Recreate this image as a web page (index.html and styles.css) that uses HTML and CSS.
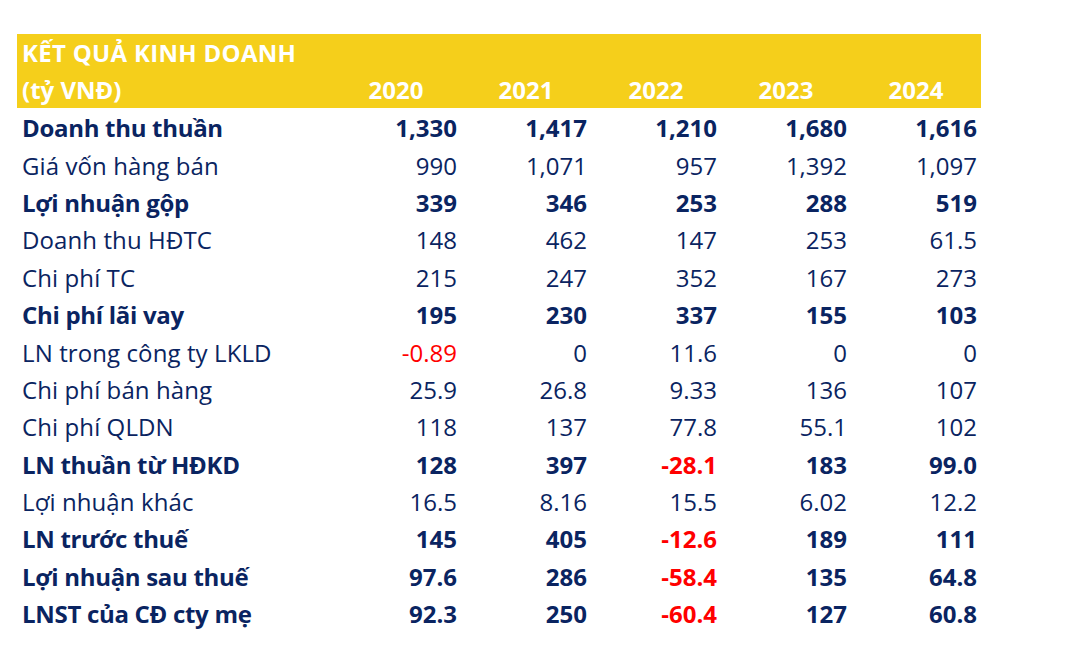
FILE: index.html
```html
<!DOCTYPE html>
<html lang="vi">
<head>
<meta charset="utf-8">
<title>Kết quả kinh doanh</title>
<link rel="stylesheet" href="styles.css">
</head>
<body>
<div class="table">
  <div class="head">
    <div class="row hrow">
      <div class="label title">KẾT QUẢ KINH DOANH</div>
    </div>
    <div class="row hrow">
      <div class="label">(tỷ VNĐ)</div>
      <div class="year">2020</div>
      <div class="year">2021</div>
      <div class="year">2022</div>
      <div class="year">2023</div>
      <div class="year">2024</div>
    </div>
  </div>
  <div class="body">
    <div class="row bold"><div class="label">Doanh thu thuần</div><div class="num">1,330</div><div class="num">1,417</div><div class="num">1,210</div><div class="num">1,680</div><div class="num">1,616</div></div>
    <div class="row"><div class="label">Giá vốn hàng bán</div><div class="num">990</div><div class="num">1,071</div><div class="num">957</div><div class="num">1,392</div><div class="num">1,097</div></div>
    <div class="row bold"><div class="label">Lợi nhuận gộp</div><div class="num">339</div><div class="num">346</div><div class="num">253</div><div class="num">288</div><div class="num">519</div></div>
    <div class="row"><div class="label">Doanh thu HĐTC</div><div class="num">148</div><div class="num">462</div><div class="num">147</div><div class="num">253</div><div class="num">61.5</div></div>
    <div class="row"><div class="label">Chi phí TC</div><div class="num">215</div><div class="num">247</div><div class="num">352</div><div class="num">167</div><div class="num">273</div></div>
    <div class="row bold"><div class="label">Chi phí lãi vay</div><div class="num">195</div><div class="num">230</div><div class="num">337</div><div class="num">155</div><div class="num">103</div></div>
    <div class="row"><div class="label">LN trong công ty LKLD</div><div class="num neg">-0.89</div><div class="num">0</div><div class="num">11.6</div><div class="num">0</div><div class="num">0</div></div>
    <div class="row"><div class="label">Chi phí bán hàng</div><div class="num">25.9</div><div class="num">26.8</div><div class="num">9.33</div><div class="num">136</div><div class="num">107</div></div>
    <div class="row"><div class="label">Chi phí QLDN</div><div class="num">118</div><div class="num">137</div><div class="num">77.8</div><div class="num">55.1</div><div class="num">102</div></div>
    <div class="row bold"><div class="label">LN thuần từ HĐKD</div><div class="num">128</div><div class="num">397</div><div class="num neg">-28.1</div><div class="num">183</div><div class="num">99.0</div></div>
    <div class="row"><div class="label">Lợi nhuận khác</div><div class="num">16.5</div><div class="num">8.16</div><div class="num">15.5</div><div class="num">6.02</div><div class="num">12.2</div></div>
    <div class="row bold"><div class="label">LN trước thuế</div><div class="num">145</div><div class="num">405</div><div class="num neg">-12.6</div><div class="num">189</div><div class="num">111</div></div>
    <div class="row bold"><div class="label">Lợi nhuận sau thuế</div><div class="num">97.6</div><div class="num">286</div><div class="num neg">-58.4</div><div class="num">135</div><div class="num">64.8</div></div>
    <div class="row bold"><div class="label">LNST của CĐ cty mẹ</div><div class="num">92.3</div><div class="num">250</div><div class="num neg">-60.4</div><div class="num">127</div><div class="num">60.8</div></div>
  </div>
</div>
</body>
</html>
```
FILE: styles.css
```css
html, body {
  margin: 0;
  padding: 0;
  background: #ffffff;
}
body {
  padding: 34px 0 0 17px;
  font-family: "Open Sans", "Noto Sans", sans-serif;
  color: #0a2461;
}
.table {
  width: 964px;
}
.head {
  background: #f5cf1b;
  color: #ffffff;
  font-weight: 700;
  height: 74px;
  margin-bottom: 1px;
}
.row {
  display: grid;
  grid-template-columns: 314px repeat(5, 130px);
  align-items: center;
}
.hrow {
  height: 37px;
  font-size: 24px;
}
.hrow .label {
  padding-left: 5px;
}
.title {
  letter-spacing: 0.3px;
}
.year {
  text-align: center;
}
.body .row {
  height: 37.4px;
  font-size: 24px;
}
.body .label {
  padding-left: 5px;
  letter-spacing: 0.1px;
}
.body .bold .label {
  letter-spacing: -0.3px;
}
.num {
  text-align: right;
  padding-right: 4px;
}
.bold {
  font-weight: 700;
}
.neg {
  color: #ff0000;
}
```
